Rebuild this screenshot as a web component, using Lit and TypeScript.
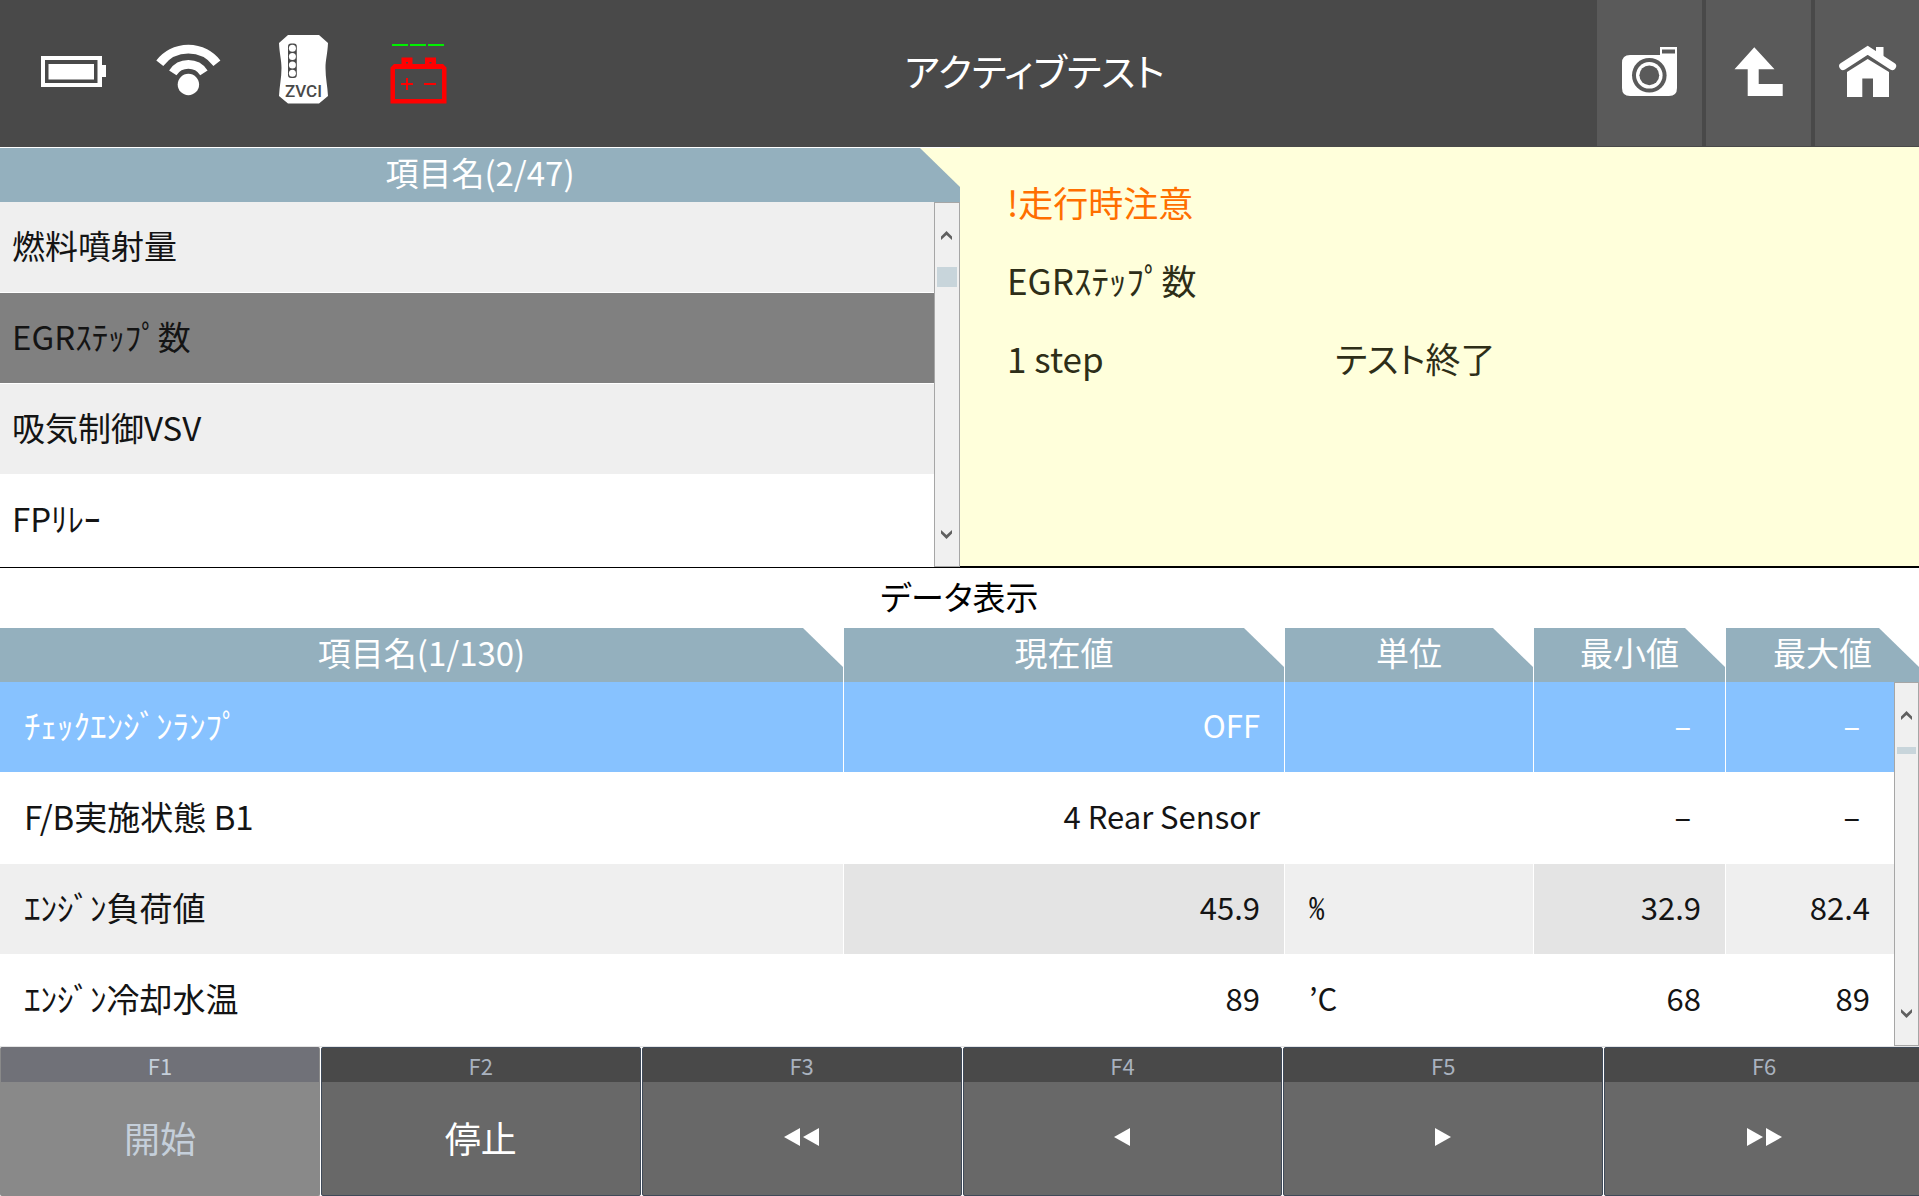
import { LitElement, html, css, svg, nothing } from "lit";
import { customElement, property, state } from "lit/decorators.js";
import { classMap } from "lit/directives/class-map.js";

interface DataRow {
  name: string;
  value: string;
  unit: string;
  min: string;
  max: string;
}

const ITEMS = ["燃料噴射量", "EGRｽﾃｯﾌﾟ数", "吸気制御VSV", "FPﾘﾚｰ"];

const ROWS: DataRow[] = [
  { name: "ﾁｪｯｸｴﾝｼﾞﾝﾗﾝﾌﾟ", value: "OFF", unit: "", min: "–", max: "–" },
  { name: "F/B実施状態 B1", value: "4 Rear Sensor", unit: "", min: "–", max: "–" },
  { name: "ｴﾝｼﾞﾝ負荷値", value: "45.9", unit: "%", min: "32.9", max: "82.4" },
  { name: "ｴﾝｼﾞﾝ冷却水温", value: "89", unit: "’C", min: "68", max: "89" },
];

const left = (x: number) => svg`<path d="M${x} 9 L${x + 16} 0 V18 Z"/>`;
const right = (x: number) => svg`<path d="M${x + 16} 9 L${x} 0 V18 Z"/>`;

/** Vertical scroll bar with step buttons and a thumb. */
@customElement("scroll-bar")
export class ScrollBar extends LitElement {
  @property({ type: Number }) thumb = 20;

  static styles = css`
    :host {
      display: flex;
      flex-direction: column;
      box-sizing: border-box;
      height: 100%;
      border: 1px solid #a6a6a6;
      background: #f0f0f0;
    }
    .step {
      display: flex;
      align-items: center;
      justify-content: center;
      flex: none;
      height: 64px;
      padding: 0 1px 0 0;
      border: 0;
      background: none;
    }
    .arrow {
      width: 11px;
      height: 9px;
      fill: #606060;
    }
    .track {
      flex: 1;
      padding: 0 2px;
    }
    .thumb {
      background: #c8d5db;
    }
  `;

  render() {
    return html`
      <button class="step" aria-label="上へ">
        <svg class="arrow" viewBox="0 0 11 9"><path d="M0 5.500 L5.500 0 L11 5.500 V9 L5.500 4 L0 9 Z" /></svg>
      </button>
      <div class="track"><div class="thumb" style="height:${this.thumb}px"></div></div>
      <button class="step" aria-label="下へ">
        <svg class="arrow" viewBox="0 0 11 9"><path d="M0 3.500 L5.500 9 L11 3.500 V0 L5.500 5 L0 0 Z" /></svg>
      </button>
    `;
  }
}

@customElement("app-root")
export class AppRoot extends LitElement {
  @state() private item = 1;
  @state() private row = 0;

  static styles = css`
    :host {
      display: flex;
      flex-direction: column;
      min-height: 100vh;
      overflow: hidden;
      background: #fff;
      color: #141414;
      font-family: "Noto Sans CJK JP", "Liberation Sans", sans-serif;
      font-size: 33px;
      line-height: 48px;
      font-feature-settings: "palt";
    }
    button {
      margin: 0;
      border: 0;
      border-radius: 0;
      padding: 0;
      font: inherit;
      font-feature-settings: inherit;
      color: inherit;
    }

    /* Title bar */
    .bar {
      display: flex;
      height: 147px;
      background: #494949;
      color: #fff;
    }
    .status {
      display: grid;
      grid-template-columns: repeat(4, 115px);
      padding-left: 16px;
    }
    .status svg,
    .tool svg {
      display: block;
    }
    .title {
      flex: 1;
      margin: 0;
      padding-right: 4px;
      font-size: 38px;
      font-weight: 400;
      line-height: 140px;
      text-align: center;
    }
    .tools {
      display: flex;
      gap: 4px;
      padding-bottom: 1px;
    }
    .tool {
      background: #5a5a5a;
    }
    .tool:last-child {
      width: 104px;
      overflow: hidden;
    }
    .zvci {
      font-family: Roboto, "Liberation Sans", sans-serif;
      font-size: 17px;
      font-weight: 500;
    }

    /* Item list and test state */
    .top {
      display: grid;
      grid-template-columns: 960px 1fr;
      background: #ffffdb;
      border-bottom: 1px solid #000;
    }
    .list {
      display: grid;
      grid-template-columns: 1fr 26px;
      grid-template-rows: 54px auto;
      border-top: 1px solid #fff;
    }
    .head {
      box-sizing: border-box;
      margin: 0;
      background: #94b0be;
      color: #fff;
      font-size: 33px;
      font-weight: 400;
      line-height: 48px;
      text-align: center;
      clip-path: polygon(0 0, calc(100% - 40px) 0, 100% 39px, 100% 100%, 0 100%);
    }
    .list .head {
      grid-column: 1 / -1;
    }
    .items {
      margin: 0;
      padding: 0 0 1px;
      list-style: none;
      background: #fff;
    }
    .item {
      display: block;
      box-sizing: border-box;
      width: 100%;
      height: 91px;
      padding: 0 12px 4px;
      border-bottom: 1px solid #fff;
      background: #fff;
      text-align: left;
    }
    .item.alt {
      background: #efefef;
    }
    .item.on {
      background: #808080;
    }
    .state {
      display: grid;
      grid-template-columns: 36% 1fr;
      align-content: start;
      padding: 16px 0 0 47px;
      border-bottom: 1px solid #000;
      color: #2e2e18;
      font-size: 35px;
      line-height: 78px;
    }
    .state p {
      margin: 0;
    }
    .wide {
      grid-column: 1 / -1;
    }
    .warn {
      color: #ff6f00;
    }

    /* Data table */
    .caption {
      margin: 0;
      padding-bottom: 4px;
      color: #000;
      font-size: 33px;
      font-weight: 400;
      line-height: 56px;
      text-align: center;
    }
    .data {
      width: 100%;
      table-layout: fixed;
      border-spacing: 0;
      border-bottom: 1px solid #e4e4e4;
    }
    .value {
      width: 441px;
    }
    .unit {
      width: 249px;
    }
    .min {
      width: 192px;
    }
    .max {
      width: 168px;
    }
    .scroll {
      width: 25px;
    }
    th {
      height: 54px;
      padding: 0;
      font-weight: 400;
    }
    th .head {
      height: 54px;
      margin-right: 1px;
    }
    th:last-child .head {
      margin-right: 0;
    }
    .cell {
      box-sizing: border-box;
      height: 91px;
      padding: 0 24px 4px;
      border-right: 1px solid #fff;
      border-bottom: 1px solid #fff;
      font-size: 31px;
      text-align: right;
      white-space: nowrap;
    }
    .text {
      font-size: 33px;
      text-align: left;
    }
    .unit-cell {
      text-align: left;
    }
    .half {
      font-feature-settings: "hwid";
    }
    .none {
      padding-right: 34px;
    }
    .edge {
      border-right: 0;
    }
    .alt .cell {
      background: #efefef;
    }
    .alt .deep {
      background: #e4e4e4;
    }
    .picked .cell {
      background: #87c2ff;
      color: #fff;
    }
    .slot {
      height: 364px;
      padding: 0;
    }

    /* Function keys */
    .keys {
      display: grid;
      flex: 1;
      grid-template-columns: repeat(6, 1fr);
      width: calc(100% + 6px);
    }
    .key {
      display: flex;
      flex-direction: column;
      min-height: 148px;
      border: 1px solid #3f4a59;
      border-radius: 2px;
      margin-right: 1px;
      background: #686868;
      color: #fff;
      font-size: 36px;
    }
    .key:disabled {
      border-color: #898989;
      border-top-color: #707178;
      background: #898989;
      color: #c5cfda;
    }
    .tag {
      background: #494949;
      color: #a9b2bf;
      font-size: 22px;
      line-height: 34px;
    }
    .key:disabled .tag {
      background: #707178;
      color: #c5cfda;
    }
    .label {
      display: flex;
      flex: 1;
      align-items: center;
      justify-content: center;
      padding-bottom: 4px;
    }
    .tri {
      height: 18px;
      fill: #fff;
    }
  `;

  private status() {
    return html`
      <div class="status">
        <svg width="115" height="147" viewBox="16 0 115 147" role="img" aria-label="バッテリー">
          <path fill="#fff" fill-rule="evenodd" d="M41 56H102V65H106V77H102V87H41ZM45 60V83H97.5V60Z" />
          <rect x="48.5" y="64" width="45.5" height="15.5" fill="#fff" />
        </svg>
        <svg width="115" height="147" viewBox="131 0 115 147" role="img" aria-label="Wi-Fi">
          <g fill="none" stroke="#fff" stroke-width="8.8">
            <path d="M159.8 63.2A36 36 0 0 1 216.9 63.2" />
            <path d="M172.8 72.8A18.6 18.6 0 0 1 203.9 72.8" />
          </g>
          <circle cx="188.4" cy="84.5" r="10.7" fill="#fff" />
        </svg>
        <svg width="115" height="147" viewBox="246 0 115 147" role="img" aria-label="ZVCI">
          <path
            fill="#fff"
            d="M288 35H319L328 43C327.500 54 325.500 60 325.500 68C325.500 78 327.500 86 328 96L319 103.500H288L279 96C279.500 86 281.500 78 281.500 68C281.500 60 279.500 54 279 43Z"
          />
          <rect x="288" y="43.500" width="8.800" height="34.500" rx="3" fill="#494949" />
          <g fill="#fff">
            <circle cx="292.400" cy="48.200" r="3.500" />
            <circle cx="292.400" cy="56.600" r="3.500" />
            <circle cx="292.400" cy="64.900" r="3.500" />
            <circle cx="292.400" cy="73.200" r="3.500" />
          </g>
          <text class="zvci" x="303.500" y="97" text-anchor="middle" fill="#494949">ZVCI</text>
        </svg>
        <svg width="115" height="147" viewBox="361 0 115 147" role="img" aria-label="車両バッテリー電圧">
          <path stroke="#00f000" stroke-width="2" d="M392 45H408M410 45H426M428 45H444" />
          <g fill="#f00">
            <path
              fill-rule="evenodd"
              d="M394 64H401.500V57.500H412.500V64H425V57.500H436V64H443L446.500 67.500V103.500H390.500V67.500ZM395 69V99H442V69Z"
            />
            <path d="M401 83H406V78H408V83H413V85H408V90H406V85H401ZM424 83H436V85H424Z" />
          </g>
          <path fill="#494949" d="M406 62h2v1.500h-2zM429.500 62h2v1.500h-2z" />
        </svg>
      </div>
    `;
  }

  private tools() {
    return html`
      <nav class="tools">
        <button class="tool" aria-label="カメラ">
          <svg width="105" height="146" viewBox="0 0 105 146">
            <path
              fill="#fff"
              fill-rule="evenodd"
              d="M33 55H63V47H80V88Q80 96 72 96H33Q25 96 25 88V63Q25 55 33 55ZM65 49.500V53.500H78V49.500Z"
            />
            <circle cx="52.300" cy="75.300" r="17.300" fill="#5a5a5a" />
            <circle cx="52.300" cy="75.300" r="13.300" fill="#fff" />
            <circle cx="52.300" cy="75.300" r="9.900" fill="#5a5a5a" />
          </svg>
        </button>
        <button class="tool" aria-label="戻る">
          <svg width="105" height="146" viewBox="0 0 105 146">
            <path fill="#fff" d="M48.300 47.300L68.500 69.300H52.700V84H76.700V96H41.700V69.300H28.500Z" />
          </svg>
        </button>
        <button class="tool" aria-label="ホーム">
          <svg width="105" height="146" viewBox="0 0 105 146">
            <path fill="#fff" d="M61 47H68.500V59L61 54Z" />
            <path
              fill="none"
              stroke="#fff"
              stroke-width="7.600"
              stroke-linecap="round"
              d="M28 66.200L52.700 50.300L77.300 66.200"
            />
            <path fill="#fff" d="M52.700 59L74 72V97H58V78.500H47.300V97H32V72Z" />
          </svg>
        </button>
      </nav>
    `;
  }

  private list() {
    return html`
      <section class="list">
        <h2 class="head">項目名(2/47)</h2>
        <ul class="items">
          ${ITEMS.map(
            (name, i) => html`<li>
              <button
                class=${classMap({ item: true, alt: i % 2 === 0, on: i === this.item })}
                @click=${() => (this.item = i)}
              >
                ${name}
              </button>
            </li>`
          )}
        </ul>
        <scroll-bar .thumb=${20}></scroll-bar>
      </section>
    `;
  }

  private dataRow(r: DataRow, i: number) {
    const num = (text: string, extra: Record<string, boolean>) =>
      html`<td class=${classMap({ cell: true, none: text === "–", ...extra })}>${text}</td>`;
    return html`
      <tr class=${classMap({ alt: i % 2 === 0, picked: i === this.row })} @click=${() => (this.row = i)}>
        <td class="cell text">${r.name}</td>
        <td class="cell deep">${r.value}</td>
        <td class=${classMap({ cell: true, "unit-cell": true, half: r.unit === "%" })}>${r.unit}</td>
        ${num(r.min, { deep: true })} ${num(r.max, { edge: true })}
        ${i === 0
          ? html`<td class="slot" rowspan=${ROWS.length}><scroll-bar .thumb=${7}></scroll-bar></td>`
          : nothing}
      </tr>
    `;
  }

  private key(tag: string, label: unknown, name = "", disabled = false) {
    return html`
      <button class="key" ?disabled=${disabled} aria-label=${name || nothing}>
        <span class="tag">${tag}</span>
        <span class="label">${label}</span>
      </button>
    `;
  }

  render() {
    return html`
      <header class="bar">
        ${this.status()}
        <h1 class="title">アクティブテスト</h1>
        ${this.tools()}
      </header>
      <div class="top">
        ${this.list()}
        <section class="state">
          <p class="wide warn">!走行時注意</p>
          <p class="wide">EGRｽﾃｯﾌﾟ数</p>
          <p>1 step</p>
          <p>テスト終了</p>
        </section>
      </div>
      <main>
        <h2 class="caption">データ表示</h2>
        <table class="data">
          <colgroup>
            <col />
            <col class="value" />
            <col class="unit" />
            <col class="min" />
            <col class="max" />
            <col class="scroll" />
          </colgroup>
          <thead>
            <tr>
              <th><div class="head">項目名(1/130)</div></th>
              <th><div class="head">現在値</div></th>
              <th><div class="head">単位</div></th>
              <th><div class="head">最小値</div></th>
              <th colspan="2"><div class="head">最大値</div></th>
            </tr>
          </thead>
          <tbody>
            ${ROWS.map((r, i) => this.dataRow(r, i))}
          </tbody>
        </table>
      </main>
      <footer class="keys">
        ${this.key("F1", "開始", "", true)} ${this.key("F2", "停止")}
        ${this.key("F3", html`<svg class="tri" width="35" viewBox="0 0 35 18">${left(0)}${left(19)}</svg>`, "早戻し")}
        ${this.key("F4", html`<svg class="tri" width="16" viewBox="0 0 16 18">${left(0)}</svg>`, "戻し")}
        ${this.key("F5", html`<svg class="tri" width="16" viewBox="0 0 16 18">${right(0)}</svg>`, "送り")}
        ${this.key("F6", html`<svg class="tri" width="35" viewBox="0 0 35 18">${right(0)}${right(19)}</svg>`, "早送り")}
      </footer>
    `;
  }
}
